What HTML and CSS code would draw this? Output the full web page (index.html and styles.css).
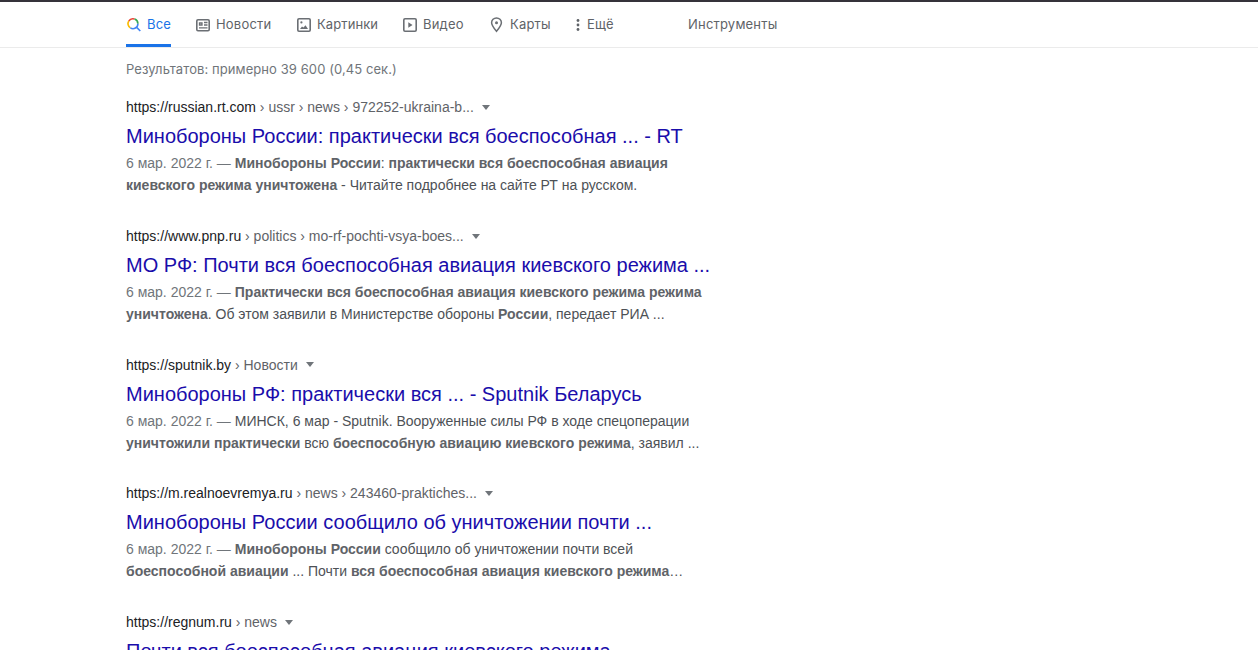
FILE: index.html
```
<!DOCTYPE html>
<html lang="ru">

<head>
    <meta charset="UTF-8">
    <meta name="viewport" content="width=device-width, initial-scale=1.0">
    <title>Результаты поиска</title>
    <link rel="stylesheet" href="styles.css">
</head>

<body>

    <!-- Вкладки поиска -->
    <nav class="tabs">
        <a class="tab active">
            <svg class="icon" viewBox="0 0 16 16" fill="none" stroke-width="1.6">
                <path d="M2.8 4A4.9 4.9 0 0 1 8.6 2.1" stroke="#ea4335" />
                <path d="M2.8 4A4.9 4.9 0 0 0 4.4 10.9" stroke="#fbbc04" />
                <path d="M8.6 2.1A4.9 4.9 0 0 1 11.9 6.7" stroke="#34a853" />
                <path d="M4.4 10.9A4.9 4.9 0 0 0 11.9 6.7M10.4 10.1L14.3 14" stroke="#4285f4" />
            </svg>
            <span class="label w-all">Все</span>
        </a>
        <a class="tab">
            <svg class="icon" viewBox="0 0 16 16" fill="none" stroke="#6b6f74">
                <rect x="1.8" y="2.8" width="12.4" height="10.9" rx="1.2" stroke-width="1.6" />
                <path d="M4.5 6h2.5v2H4.500zM9 5.5h3.500M9 8h3.500M4 10.800h8.500" stroke-width="1.3" />
            </svg>
            <span class="label w-news">Новости</span>
        </a>
        <a class="tab">
            <svg class="icon" viewBox="0 0 16 16" fill="none" stroke="#6b6f74">
                <rect x="1.8" y="1.8" width="12.4" height="12.4" rx="1.2" stroke-width="1.6" />
                <path d="M4 12l2-2.500 1.500 1 2-2.200L12 12z" fill="#6b6f74" stroke="none" />
                <circle cx="5.4" cy="5.4" r="1.1" fill="#6b6f74" stroke="none" />
            </svg>
            <span class="label w-images">Картинки</span>
        </a>
        <a class="tab">
            <svg class="icon" viewBox="0 0 16 16" fill="none" stroke="#6b6f74">
                <rect x="1.8" y="1.8" width="12.4" height="12.4" rx="1.2" stroke-width="1.6" />
                <path d="M6.300 5.200l4.200 2.800-4.200 2.800z" fill="#6b6f74" stroke="none" />
            </svg>
            <span class="label w-video">Видео</span>
        </a>
        <a class="tab">
            <svg class="icon" viewBox="0 0 16 16" fill="none" stroke="#6b6f74">
                <path d="M7.5 14.3C5 11.300 2.600 8.600 2.600 5.800a4.900 4.900 0 0 1 9.800 0c0 2.800-2.400 5.500-4.900 8.500z" stroke-width="1.5" />
                <circle cx="7.5" cy="5.700" r="1.5" fill="#6b6f74" stroke="none" />
            </svg>
            <span class="label w-maps">Карты</span>
        </a>
        <a class="tab more">
            <svg class="dots" viewBox="0 0 6 16" fill="#5f6368">
                <circle cx="3" cy="3.500" r="1.4" />
                <circle cx="3" cy="8" r="1.4" />
                <circle cx="3" cy="12.500" r="1.4" />
            </svg>
            <span class="label w-more">Ещё</span>
        </a>
        <a class="tab tools"><span class="label w-tools">Инструменты</span></a>
    </nav>

    <main class="main">
        <div class="stats">Результатов: примерно 39 600 (0,45 сек.)</div>

        <!-- Список результатов -->
        <div class="result">
            <div class="url">https://russian.rt.com<span class="path"> › ussr › news › 972252-ukraina-b...</span><i class="arrow"></i></div>
            <h3 class="title">Минобороны России: практически вся боеспособная ... - RT</h3>
            <p class="snippet"><span class="date">6 мар. 2022 г. — </span><b>Минобороны России</b>: <b>практически вся боеспособная авиация</b><br>
                <b>киевского режима уничтожена</b> - Читайте подробнее на сайте РТ на русском.</p>
        </div>

        <div class="result">
            <div class="url">https://www.pnp.ru<span class="path"> › politics › mo-rf-pochti-vsya-boes...</span><i class="arrow"></i></div>
            <h3 class="title">МО РФ: Почти вся боеспособная авиация киевского режима ...</h3>
            <p class="snippet"><span class="date">6 мар. 2022 г. — </span><b>Практически вся боеспособная авиация киевского режима режима</b><br>
                <b>уничтожена</b>. Об этом заявили в Министерстве обороны <b>России</b>, передает РИА ...</p>
        </div>

        <div class="result">
            <div class="url">https://sputnik.by<span class="path"> › Новости</span><i class="arrow"></i></div>
            <h3 class="title">Минобороны РФ: практически вся ... - Sputnik Беларусь</h3>
            <p class="snippet"><span class="date">6 мар. 2022 г. — </span>МИНСК, 6 мар - Sputnik. Вооруженные силы РФ в ходе спецоперации<br>
                <b>уничтожили практически</b> всю <b>боеспособную авиацию киевского режима</b>, заявил ...</p>
        </div>

        <div class="result">
            <div class="url">https://m.realnoevremya.ru<span class="path"> › news › 243460-praktiches...</span><i class="arrow"></i></div>
            <h3 class="title">Минобороны России сообщило об уничтожении почти ...</h3>
            <p class="snippet"><span class="date">6 мар. 2022 г. — </span><b>Минобороны России</b> сообщило об уничтожении почти всей<br>
                <b>боеспособной авиации</b> ... Почти <b>вся боеспособная авиация киевского режима</b>…</p>
        </div>

        <div class="result">
            <div class="url">https://regnum.ru<span class="path"> › news</span><i class="arrow"></i></div>
            <h3 class="title">Почти вся боеспособная авиация киевского режима ...</h3>
        </div>
    </main>

</body>

</html>
```
FILE: styles.css
```
html,
body {
    height: 100%;
    margin: 0;
    overflow: hidden;
}

body {
    box-sizing: border-box;
    border-top: 2px solid #35323a;
    background-color: #fff;
    color: #4d5156;
    font-family: Arial, "Liberation Sans", sans-serif;
    font-size: 14px;
}

/* Вкладки */
.tabs {
    display: flex;
    height: 45px;
    padding-left: 126px;
    border-bottom: 1px solid #ebebeb;
    color: #5f6368;
    font-family: Inter, sans-serif;
    font-size: 13px;
    letter-spacing: 0.2px;
}

.tab {
    display: flex;
    box-sizing: border-box;
    height: 45px;
    margin-right: 24px;
    padding-bottom: 1px;
    align-items: center;
    white-space: nowrap;
}

.tab.active {
    padding-top: 2px;
    padding-bottom: 0;
    border-bottom: 3px solid #1a73e8;
    color: #1a73e8;
}

.icon {
    width: 16px;
    height: 16px;
    margin-top: 2px;
    margin-right: 5px;
}

.dots {
    width: 6px;
    height: 16px;
    margin-top: 2px;
    margin-right: 6px;
}

/* Ширина подписей */
.w-all { width: 24px; }
.w-news { width: 56px; }
.w-images { width: 61px; letter-spacing: 0.1px; }
.w-video { width: 42px; }
.w-maps { width: 41px; }
.w-more { width: 27px; }
.w-tools { width: 89px; }

.tools {
    margin-left: 50px;
}

/* Результаты */
.main {
    padding-left: 126px;
}

.stats {
    height: 46.4px;
    color: #70757a;
    font-family: Inter, sans-serif;
    font-size: 13px;
    letter-spacing: 0.08px;
    line-height: 43px;
}

.result {
    width: 600px;
    height: 98.7px;
    margin-bottom: 30px;
}

.url {
    display: flex;
    height: 26px;
    align-items: center;
    color: #202124;
    line-height: 18px;
    white-space: pre;
}

.path {
    color: #5f6368;
}

.arrow {
    margin-left: 8px;
    border: 4px solid transparent;
    border-top: 5px solid #70757a;
    border-bottom: 0;
}

.title {
    margin: 3px 0;
    color: #1a0dab;
    font-size: 20px;
    font-weight: normal;
    line-height: 26px;
    white-space: nowrap;
}

.snippet {
    margin: 0;
    line-height: 22px;
    white-space: nowrap;
}

.snippet b {
    color: #5f6368;
}

.date {
    color: #70757a;
}
```
